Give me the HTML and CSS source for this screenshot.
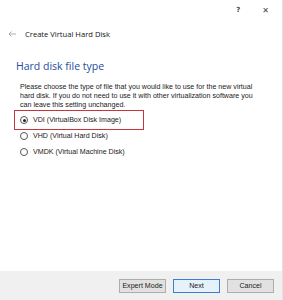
FILE: index.html
```html
<!DOCTYPE html>
<html>
<head>
<meta charset="utf-8">
<link rel="stylesheet" href="styles.css">
</head>
<body>
<div class="dialog">
  <div class="titlebar">
    <span class="help">?</span>
    <span class="close">✕</span>
  </div>
  <div class="header">
    <svg class="back" width="8" height="6" viewBox="0 0 8 6"><path d="M3.5 0.5 L1 3 L3.5 5.5 M1 3 H8" fill="none" stroke="#9a9a9a" stroke-width="0.8"/></svg>
    <span class="htitle">Create Virtual Hard Disk</span>
  </div>
  <div class="content">
    <h1 class="page-title">Hard disk file type</h1>
    <p class="desc">Please choose the type of file that you would like to use for the new virtual hard disk. If you do not need to use it with other virtualization software you can leave this setting unchanged.</p>
    <div class="options">
      <label class="opt highlighted"><span class="radio checked"></span>VDI (VirtualBox Disk Image)</label>
      <label class="opt"><span class="radio"></span>VHD (Virtual Hard Disk)</label>
      <label class="opt"><span class="radio"></span>VMDK (Virtual Machine Disk)</label>
    </div>
  </div>
  <div class="footer">
    <span class="btn">Expert Mode</span>
    <span class="btn primary">Next</span>
    <span class="btn">Cancel</span>
  </div>
</div>
</body>
</html>
```
FILE: styles.css
```css
html, body {
  margin: 0;
  padding: 0;
  background: #ffffff;
}
.dialog {
  width: 282px;
  height: 300px;
  border-right: 1px solid #e2e2e2;
  display: flex;
  flex-direction: column;
  font-family: "Liberation Sans", Arial, sans-serif;
  color: #222;
}
.titlebar {
  height: 20px;
  display: flex;
  justify-content: flex-end;
  align-items: center;
  gap: 22px;
  padding-right: 13px;
  font-family: "DejaVu Sans", sans-serif;
  font-size: 8px;
  color: #444;
}
.help { font-weight: bold; font-size: 7px; }
.close { font-size: 8px; }
.header {
  height: 28px;
  display: flex;
  align-items: center;
  padding-left: 8px;
}
.back { margin-right: 9px; }
.htitle {
  font-family: "Open Sans", sans-serif;
  font-size: 7.6px;
  color: #111;
}
.content {
  padding-left: 16px;
  padding-right: 16px;
}
.page-title {
  margin: 10px 0 0 0;
  font-family: "Open Sans", sans-serif;
  font-weight: normal;
  font-size: 10.5px;
  color: #1f4e9a;
  line-height: 16px;
}
.desc {
  margin: 9px 0 0 4px;
  font-size: 7.1px;
  line-height: 9px;
  color: #1a1a1a;
}
.options {
  margin-top: 2px;
  display: flex;
  flex-direction: column;
}
.opt {
  display: flex;
  align-items: center;
  height: 16px;
  padding-left: 4px;
  font-size: 7.1px;
  color: #1a1a1a;
}
.opt.highlighted {
  box-sizing: border-box;
  width: 130px;
  height: 20px;
  margin: -2px 0 -2px -2px;
  padding-left: 5px;
  border: 1px solid #c8343d;
}
.radio {
  width: 6px;
  height: 6px;
  border: 1px solid #555;
  border-radius: 50%;
  margin-right: 5px;
  position: relative;
  flex: none;
}
.radio.checked::after {
  content: "";
  position: absolute;
  left: 1.5px;
  top: 1.5px;
  width: 3px;
  height: 3px;
  border-radius: 50%;
  background: #222;
}
.footer {
  margin-top: auto;
  height: 29px;
  background: #f0f0f0;
  display: flex;
  justify-content: flex-end;
  align-items: center;
  gap: 7px;
  padding-right: 8px;
}
.btn {
  box-sizing: border-box;
  height: 14px;
  width: 47px;
  display: flex;
  align-items: center;
  justify-content: center;
  background: #e1e1e1;
  border: 1px solid #adadad;
  font-size: 7.1px;
  color: #222;
}
.btn.primary {
  border: 1px solid #3c7fd1;
  background: #e5f1fb;
}
```
